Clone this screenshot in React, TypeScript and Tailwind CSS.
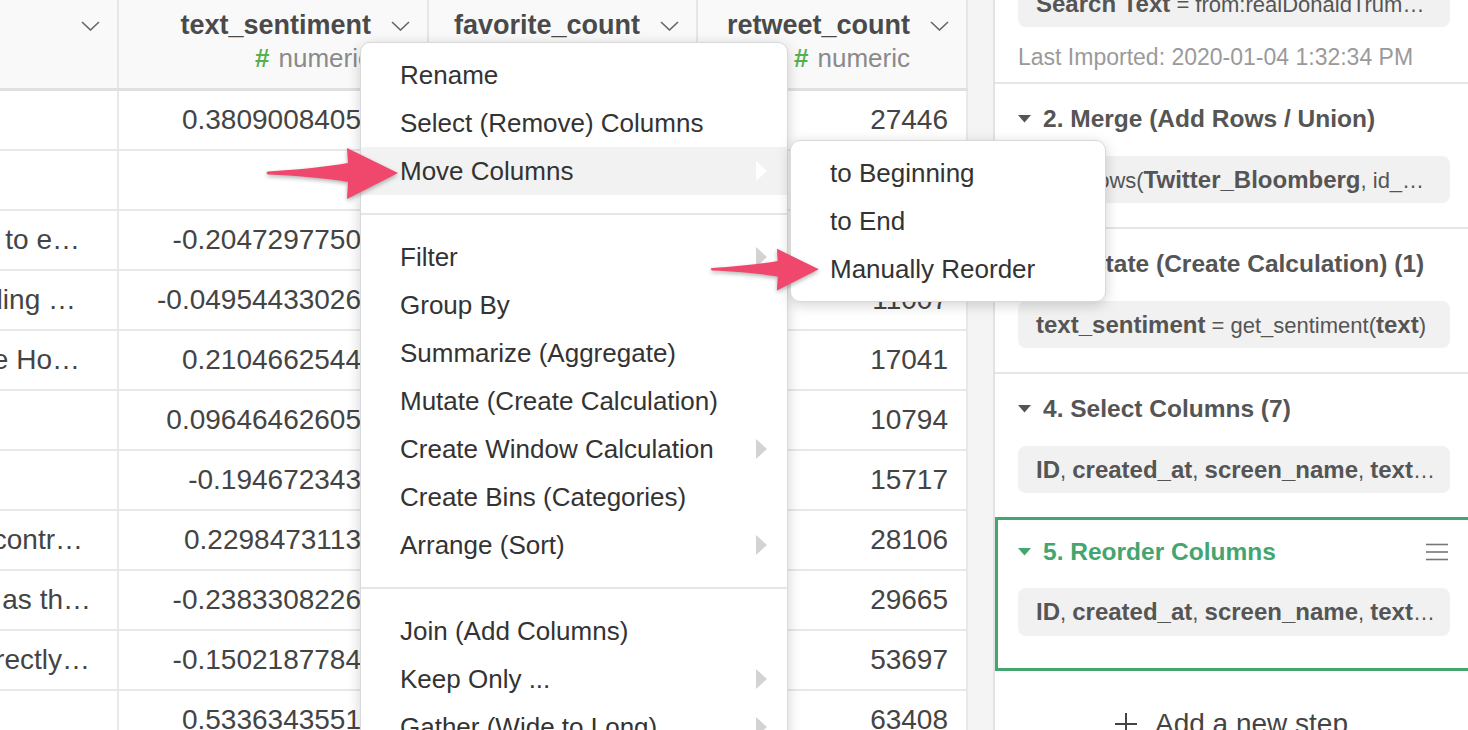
import React from 'react';

type Row = {
  lead: string;
  leadPad: string;
  sentiment: string;
  favorite: string;
  retweet: string;
};

const rows: Row[] = [
  { lead: '', leadPad: 'pr-[37px]', sentiment: '0.3809008405', favorite: '112043', retweet: '27446' },
  { lead: '', leadPad: 'pr-[37px]', sentiment: '', favorite: '84112', retweet: '18230' },
  { lead: 'according to e…', leadPad: 'pr-[37px]', sentiment: '-0.2047297750', favorite: '98321', retweet: '24412' },
  { lead: 'are building …', leadPad: 'pr-[41px]', sentiment: '-0.04954433026', favorite: '51820', retweet: '11007' },
  { lead: 'to the White Ho…', leadPad: 'pr-[37px]', sentiment: '0.2104662544', favorite: '70215', retweet: '17041' },
  { lead: '', leadPad: 'pr-[37px]', sentiment: '0.09646462605', favorite: '45310', retweet: '10794' },
  { lead: '', leadPad: 'pr-[37px]', sentiment: '-0.194672343', favorite: '66021', retweet: '15717' },
  { lead: 'total contr…', leadPad: 'pr-[34px]', sentiment: '0.2298473113', favorite: '103877', retweet: '28106' },
  { lead: 'such as th…', leadPad: 'pr-[26px]', sentiment: '-0.2383308226', favorite: '99120', retweet: '29665' },
  { lead: 'incorrectly…', leadPad: 'pr-[27px]', sentiment: '-0.1502187784', favorite: '187332', retweet: '53697' },
  { lead: '', leadPad: 'pr-[37px]', sentiment: '0.5336343551', favorite: '241506', retweet: '63408' },
];

type MenuEntry = { label: string; sub?: boolean; active?: boolean } | 'sep';

const menu: MenuEntry[] = [
  { label: 'Rename' },
  { label: 'Select (Remove) Columns' },
  { label: 'Move Columns', sub: true, active: true },
  'sep',
  { label: 'Filter', sub: true },
  { label: 'Group By' },
  { label: 'Summarize (Aggregate)' },
  { label: 'Mutate (Create Calculation)' },
  { label: 'Create Window Calculation', sub: true },
  { label: 'Create Bins (Categories)' },
  { label: 'Arrange (Sort)', sub: true },
  'sep',
  { label: 'Join (Add Columns)' },
  { label: 'Keep Only ...', sub: true },
  { label: 'Gather (Wide to Long)', sub: true },
];

const Chevron = () => (
  <svg width="19" height="10" viewBox="0 0 19 10" className="mt-[11px] shrink-0">
    <polyline points="1,1 9.5,9 18,1" fill="none" stroke="#666" strokeWidth="1.6" />
  </svg>
);

const Caret = ({ color }: { color: string }) => (
  <svg width="13" height="8" viewBox="0 0 13 8" className="shrink-0">
    <polygon points="0,0 13,0 6.5,7.5" fill={color} />
  </svg>
);

const Arrow = ({ className }: { className: string }) => (
  <svg viewBox="0 0 135 56" className={className}>
    <path
      d="M3 25.5 C30 24 60 21 83 17 L82 2 L133 27 L82 53 L83 36 C60 32 30 29.5 3 28.5 Q0 27 3 25.5 Z"
      fill="#f0476c"
    />
  </svg>
);

const HeaderCell = ({ title, type }: { title?: string; type?: boolean }) => (
  <div className="border-r-2 border-[#e6e6e6] flex justify-end items-start pt-[10px] pr-[17px] gap-[20px] overflow-hidden">
    {title && (
      <div className="flex flex-col items-end whitespace-nowrap">
        <span className="text-[27px] font-bold leading-[30px] text-[#4a4a4a]">{title}</span>
        {type && (
          <span className="mt-[3px] text-[26px] leading-[30px] text-[#8a8a8a]">
            <span className="font-bold text-[#56b04f] mr-[9px]">#</span>numeric
          </span>
        )}
      </div>
    )}
    <Chevron />
  </div>
);

const Box = ({ className, children }: { className: string; children: React.ReactNode }) => (
  <div className={`rounded-[8px] bg-[#f1f1f1] flex items-center pl-[18px] whitespace-nowrap overflow-hidden text-[22px] text-[#555] ${className}`}>
    <span>{children}</span>
  </div>
);

const Step = ({ title, children, divider = true }: { title: string; children: React.ReactNode; divider?: boolean }) => (
  <div className={`pl-[23px] pr-[18px] pt-[21px] pb-[24px] ${divider ? 'border-b-2 border-[#e6e6e6]' : ''}`}>
    <div className="flex items-center gap-[12px] h-[28px]">
      <Caret color="#555" />
      <span className="text-[24.5px] font-bold text-[#555] whitespace-nowrap">{title}</span>
    </div>
    <Box className="mt-[23px] h-[47px]">{children}</Box>
  </div>
);

const B = ({ children }: { children: React.ReactNode }) => (
  <span className="font-bold text-[24px]">{children}</span>
);

const columnList = (
  <>
    <B>ID</B>, <B>created_at</B>, <B>screen_name</B>, <B>text</B>…
  </>
);

export default function App() {
  return (
    <div className="relative w-[1468px] h-[730px] overflow-hidden bg-white flex font-['Liberation_Sans',Arial,sans-serif]">
      {/* data grid */}
      <div className="w-[968px] shrink-0 flex flex-col">
        <div className="grid grid-cols-[119px_310px_269px_270px] h-[91px] shrink-0 bg-[#f9f9f9] border-b-[3px] border-[#e0e0e0]">
          <HeaderCell />
          <HeaderCell title="text_sentiment" type />
          <HeaderCell title="favorite_count" type />
          <HeaderCell title="retweet_count" type />
        </div>
        {rows.map((r, i) => (
          <div
            key={i}
            className="grid grid-cols-[119px_310px_269px_270px] h-[60px] shrink-0 border-b-2 border-[#e8e8e8] text-[28px] text-[#444] whitespace-nowrap"
          >
            <div className={`border-r-2 border-[#e8e8e8] flex items-center justify-end overflow-hidden ${r.leadPad}`}>
              {r.lead}
            </div>
            <div className="border-r-2 border-[#e8e8e8] flex items-center justify-end overflow-hidden pr-[66px]">
              {r.sentiment}
            </div>
            <div className="border-r-2 border-[#e8e8e8] flex items-center justify-end overflow-hidden pr-[20px]">
              {r.favorite}
            </div>
            <div className="border-r-2 border-[#e8e8e8] flex items-center justify-end overflow-hidden pr-[18px]">
              {r.retweet}
            </div>
          </div>
        ))}
      </div>

      {/* splitter */}
      <div className="w-[27px] shrink-0 bg-[#f4f4f4] border-r-2 border-[#e2e2e2]" />

      {/* steps panel */}
      <div className="flex-1 flex flex-col">
        <div className="pl-[23px] pr-[18px] pb-[11px] border-b-2 border-[#e6e6e6]">
          <Box className="-mt-[20px] h-[47px]">
            <B>Search Text</B> = from:realDonaldTrum…
          </Box>
          <div className="mt-[16px] leading-[28px] text-[23px] text-[#9a9a9a] whitespace-nowrap">
            Last Imported: 2020-01-04 1:32:34 PM
          </div>
        </div>

        <Step title="2. Merge (Add Rows / Union)">
          bind_rows(<B>Twitter_Bloomberg</B>, id_…
        </Step>
        <Step title="3. Mutate (Create Calculation) (1)">
          <B>text_sentiment</B> = get_sentiment(<B>text</B>)
        </Step>
        <Step title="4. Select Columns (7)" divider={false}>
          {columnList}
        </Step>

        <div className="border-[3px] border-r-0 border-[#44a56f] pl-[20px] pr-[18px] pt-[18px] pb-[32px]">
          <div className="flex items-center h-[28px]">
            <Caret color="#44a56f" />
            <span className="ml-[12px] flex-1 text-[24.5px] font-bold text-[#44a56f] whitespace-nowrap">
              5. Reorder Columns
            </span>
            <svg width="22" height="18" viewBox="0 0 22 18" className="mr-[2px]">
              <line x1="0" y1="1.5" x2="22" y2="1.5" stroke="#777" strokeWidth="1.6" />
              <line x1="0" y1="9" x2="22" y2="9" stroke="#777" strokeWidth="1.6" />
              <line x1="0" y1="16.5" x2="22" y2="16.5" stroke="#777" strokeWidth="1.6" />
            </svg>
          </div>
          <Box className="mt-[22px] h-[48px]">{columnList}</Box>
        </div>

        <div className="mt-[39px] flex items-center justify-center gap-[18px] text-[28px] leading-[28px] text-[#444]">
          <svg width="22" height="22" viewBox="0 0 22 22">
            <line x1="11" y1="0" x2="11" y2="22" stroke="#444" strokeWidth="2" />
            <line x1="0" y1="11" x2="22" y2="11" stroke="#444" strokeWidth="2" />
          </svg>
          <span className="whitespace-nowrap">Add a new step</span>
        </div>
      </div>

      {/* column context menu */}
      <div className="absolute left-[360px] top-[42px] w-[428px] bg-white rounded-[10px] border border-[#d9d9d9] shadow-[0_3px_14px_rgba(0,0,0,0.18)] py-[8px] text-[26px] text-[#333]">
        {menu.map((m, i) =>
          m === 'sep' ? (
            <div key={i} className="my-[18px] h-[2px] bg-[#e6e6e6]" />
          ) : (
            <div
              key={i}
              className={`h-[48px] flex items-center justify-between pl-[39px] pr-[20px] whitespace-nowrap ${m.active ? 'bg-[#f2f2f2]' : ''}`}
            >
              <span>{m.label}</span>
              {m.sub && (
                <svg width="11" height="20" viewBox="0 0 11 20">
                  <polygon points="0,0 11,10 0,20" fill={m.active ? '#ffffff' : '#d3d3d3'} />
                </svg>
              )}
            </div>
          )
        )}
      </div>

      {/* Move Columns submenu */}
      <div className="absolute left-[790px] top-[140px] w-[316px] bg-white rounded-[10px] border border-[#d9d9d9] shadow-[0_3px_14px_rgba(0,0,0,0.18)] py-[8px] text-[26px] text-[#333]">
        {['to Beginning', 'to End', 'Manually Reorder'].map(t => (
          <div key={t} className="h-[48px] flex items-center pl-[39px] whitespace-nowrap">
            {t}
          </div>
        ))}
      </div>

      <Arrow className="absolute left-[265px] top-[146px] w-[135px] h-[56px] drop-shadow-[0_2px_2px_rgba(0,0,0,0.3)]" />
      <Arrow className="absolute left-[709px] top-[247px] w-[112px] h-[46px] drop-shadow-[0_2px_2px_rgba(0,0,0,0.3)]" />
    </div>
  );
}
